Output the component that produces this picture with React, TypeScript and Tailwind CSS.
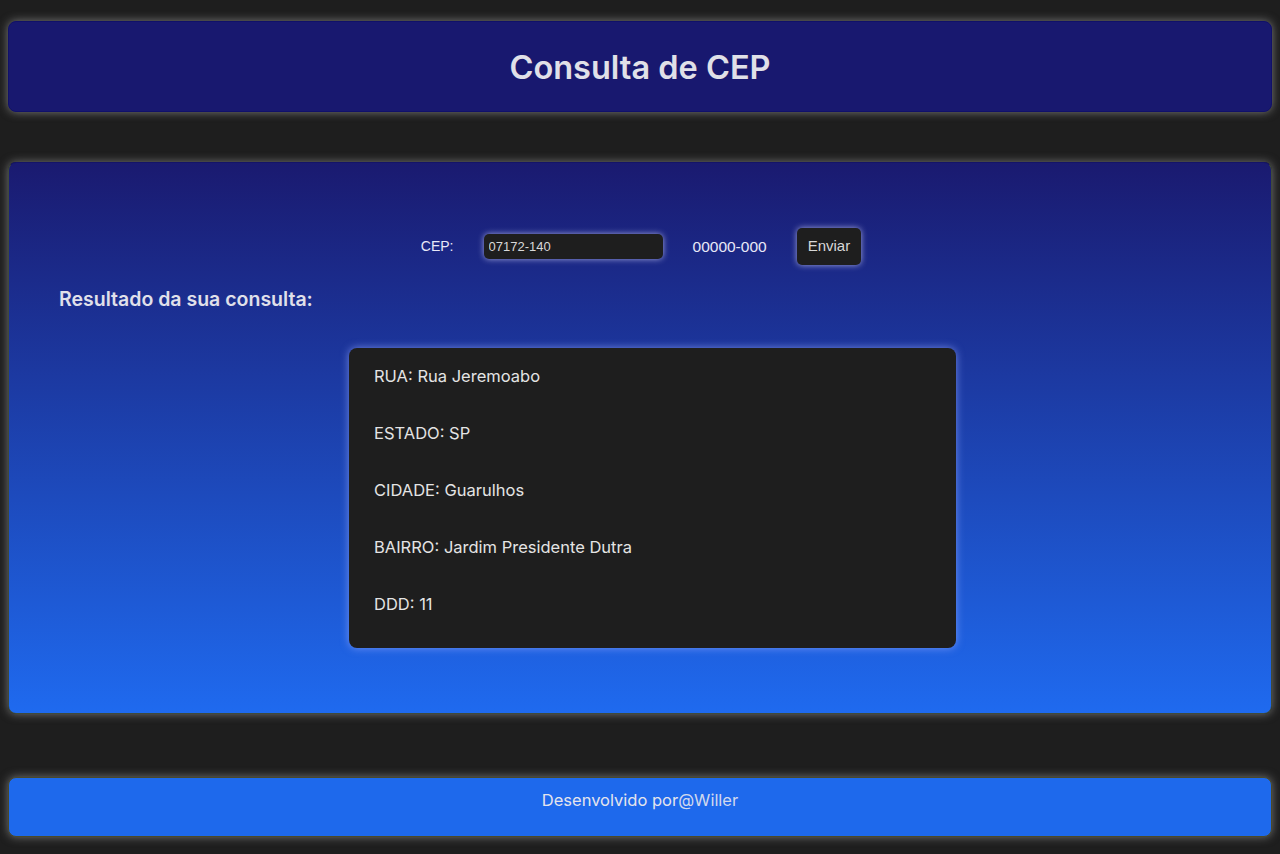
import React from 'react';

const fields = [
  { label: 'RUA', value: 'Rua Jeremoabo' },
  { label: 'ESTADO', value: 'SP' },
  { label: 'CIDADE', value: 'Guarulhos' },
  { label: 'BAIRRO', value: 'Jardim Presidente Dutra' },
  { label: 'DDD', value: '11' },
];

export default function App() {
  return (
    <div className="min-h-[854px] bg-[#1e1e1e] px-2 pt-[21px] pb-[17px] font-['Inter','Noto_Sans',sans-serif] text-[#e2e2e2]">
      <header className="h-[91px] rounded-lg border border-[#10106a] bg-[#18186f] shadow-[0_0_10px_rgba(200,200,200,0.55)] flex items-center justify-center pt-[3px]">
        <h1 className="text-[32.5px] font-semibold text-[#e0e0e8]">Consulta de CEP</h1>
      </header>

      <main className="mt-[50px] h-[552px] rounded-lg border border-[#3f4a3c] border-t-[#141468] bg-[linear-gradient(to_bottom,#1a1a70,#1f6aef)] shadow-[0_0_10px_rgba(200,200,200,0.5)] pt-[65px] px-[50px]">
        <div className="flex items-center justify-center gap-[30px] font-['Liberation_Sans',Arial,sans-serif] text-[14px] text-[#e8e8f8]">
          <span className="text-[14px] ml-[2px]">CEP:</span>
          <input
            readOnly
            value="07172-140"
            className="w-[179px] h-[25px] rounded-[5px] bg-[#1e1e1e] px-[5px] text-[13px] text-[#d8d8d8] outline-none shadow-[0_0_6px_rgba(220,220,255,0.7)]"
          />
          <span className="text-[15.5px]">00000-000</span>
          <button className="h-[37px] px-[11px] rounded-[5px] bg-[#1e1e1e] text-[15px] text-[#d8d8d8] shadow-[0_0_6px_rgba(220,220,255,0.7)]">
            Enviar
          </button>
        </div>

        <h2 className="mt-[20px] text-[19.5px] leading-[28px] font-semibold text-[#e0e0ea]">Resultado da sua consulta:</h2>

        <div className="mt-[35px] ml-[290px] w-[607px] h-[300px] rounded-lg bg-[#1e1e1e] shadow-[0_0_8px_rgba(150,170,255,0.7)] pl-[25px] pt-[16px] flex flex-col gap-[33px]">
          {fields.map((f) => (
            <p key={f.label} className="text-[16.5px] leading-6 text-[#e4e4e4]">
              {f.label}: {f.value}
            </p>
          ))}
        </div>
      </main>

      <footer className="mt-[63px] h-[60px] rounded-lg border border-[#4a4a2a] bg-[#1e69ec] shadow-[0_0_10px_rgba(200,200,200,0.5)] flex justify-center pt-[10px]">
        <p className="text-[16.5px] text-[#e4e4ec]">
          Desenvolvido por<span className="text-[#d0d8ee]">@Willer</span>
        </p>
      </footer>
    </div>
  );
}
